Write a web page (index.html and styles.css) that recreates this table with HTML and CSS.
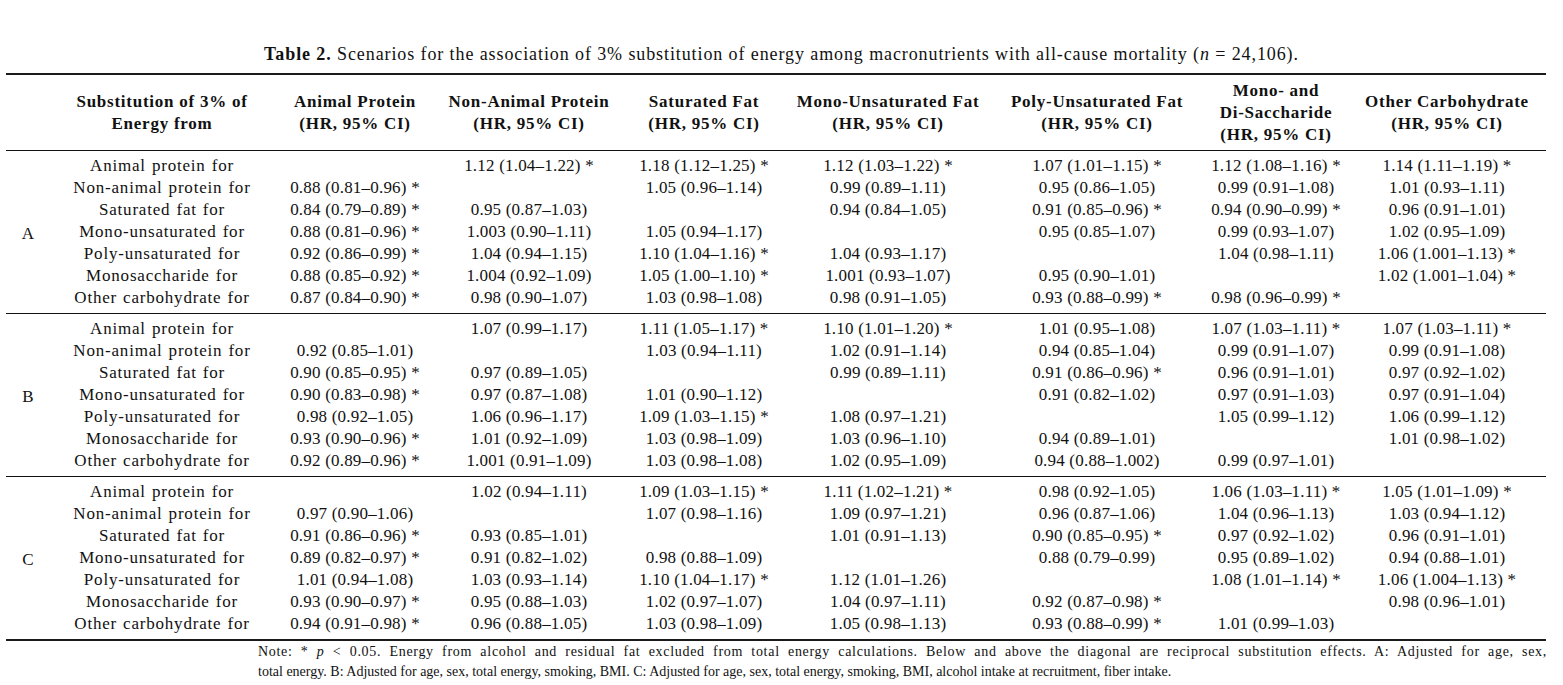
FILE: index.html
```html
<!DOCTYPE html>
<html lang="en">
<head>
<meta charset="utf-8">
<title>Table 2</title>
<link rel="stylesheet" href="styles.css">
</head>
<body>
<p class="caption"><b>Table 2.</b> Scenarios for the association of 3% substitution of energy among macronutrients with all-cause mortality (<i>n</i> = 24,106).</p>
<table class="tbl">
<colgroup>
<col class="c-grp"><col class="c-lab"><col class="c-ap"><col class="c-nap"><col class="c-sf"><col class="c-muf"><col class="c-puf"><col class="c-mds"><col class="c-oc">
</colgroup>
<thead>
<tr>
<th></th>
<th>Substitution of 3% of<br>Energy from</th>
<th>Animal Protein<br>(HR, 95% CI)</th>
<th>Non-Animal Protein<br>(HR, 95% CI)</th>
<th>Saturated Fat<br>(HR, 95% CI)</th>
<th>Mono-Unsaturated Fat<br>(HR, 95% CI)</th>
<th>Poly-Unsaturated Fat<br>(HR, 95% CI)</th>
<th>Mono- and<br>Di-Saccharide<br>(HR, 95% CI)</th>
<th>Other Carbohydrate<br>(HR, 95% CI)</th>
</tr>
</thead>
<tbody>
<tr><td class="grp" rowspan="7">A</td><td class="lab">Animal protein for</td><td></td><td>1.12 (1.04–1.22) *</td><td>1.18 (1.12–1.25) *</td><td>1.12 (1.03–1.22) *</td><td>1.07 (1.01–1.15) *</td><td>1.12 (1.08–1.16) *</td><td>1.14 (1.11–1.19) *</td></tr>
<tr><td class="lab">Non-animal protein for</td><td>0.88 (0.81–0.96) *</td><td></td><td>1.05 (0.96–1.14)</td><td>0.99 (0.89–1.11)</td><td>0.95 (0.86–1.05)</td><td>0.99 (0.91–1.08)</td><td>1.01 (0.93–1.11)</td></tr>
<tr><td class="lab">Saturated fat for</td><td>0.84 (0.79–0.89) *</td><td>0.95 (0.87–1.03)</td><td></td><td>0.94 (0.84–1.05)</td><td>0.91 (0.85–0.96) *</td><td>0.94 (0.90–0.99) *</td><td>0.96 (0.91–1.01)</td></tr>
<tr><td class="lab">Mono-unsaturated for</td><td>0.88 (0.81–0.96) *</td><td>1.003 (0.90–1.11)</td><td>1.05 (0.94–1.17)</td><td></td><td>0.95 (0.85–1.07)</td><td>0.99 (0.93–1.07)</td><td>1.02 (0.95–1.09)</td></tr>
<tr><td class="lab">Poly-unsaturated for</td><td>0.92 (0.86–0.99) *</td><td>1.04 (0.94–1.15)</td><td>1.10 (1.04–1.16) *</td><td>1.04 (0.93–1.17)</td><td></td><td>1.04 (0.98–1.11)</td><td>1.06 (1.001–1.13) *</td></tr>
<tr><td class="lab">Monosaccharide for</td><td>0.88 (0.85–0.92) *</td><td>1.004 (0.92–1.09)</td><td>1.05 (1.00–1.10) *</td><td>1.001 (0.93–1.07)</td><td>0.95 (0.90–1.01)</td><td></td><td>1.02 (1.001–1.04) *</td></tr>
<tr><td class="lab">Other carbohydrate for</td><td>0.87 (0.84–0.90) *</td><td>0.98 (0.90–1.07)</td><td>1.03 (0.98–1.08)</td><td>0.98 (0.91–1.05)</td><td>0.93 (0.88–0.99) *</td><td>0.98 (0.96–0.99) *</td><td></td></tr>
</tbody>
<tbody>
<tr><td class="grp" rowspan="7">B</td><td class="lab">Animal protein for</td><td></td><td>1.07 (0.99–1.17)</td><td>1.11 (1.05–1.17) *</td><td>1.10 (1.01–1.20) *</td><td>1.01 (0.95–1.08)</td><td>1.07 (1.03–1.11) *</td><td>1.07 (1.03–1.11) *</td></tr>
<tr><td class="lab">Non-animal protein for</td><td>0.92 (0.85–1.01)</td><td></td><td>1.03 (0.94–1.11)</td><td>1.02 (0.91–1.14)</td><td>0.94 (0.85–1.04)</td><td>0.99 (0.91–1.07)</td><td>0.99 (0.91–1.08)</td></tr>
<tr><td class="lab">Saturated fat for</td><td>0.90 (0.85–0.95) *</td><td>0.97 (0.89–1.05)</td><td></td><td>0.99 (0.89–1.11)</td><td>0.91 (0.86–0.96) *</td><td>0.96 (0.91–1.01)</td><td>0.97 (0.92–1.02)</td></tr>
<tr><td class="lab">Mono-unsaturated for</td><td>0.90 (0.83–0.98) *</td><td>0.97 (0.87–1.08)</td><td>1.01 (0.90–1.12)</td><td></td><td>0.91 (0.82–1.02)</td><td>0.97 (0.91–1.03)</td><td>0.97 (0.91–1.04)</td></tr>
<tr><td class="lab">Poly-unsaturated for</td><td>0.98 (0.92–1.05)</td><td>1.06 (0.96–1.17)</td><td>1.09 (1.03–1.15) *</td><td>1.08 (0.97–1.21)</td><td></td><td>1.05 (0.99–1.12)</td><td>1.06 (0.99–1.12)</td></tr>
<tr><td class="lab">Monosaccharide for</td><td>0.93 (0.90–0.96) *</td><td>1.01 (0.92–1.09)</td><td>1.03 (0.98–1.09)</td><td>1.03 (0.96–1.10)</td><td>0.94 (0.89–1.01)</td><td></td><td>1.01 (0.98–1.02)</td></tr>
<tr><td class="lab">Other carbohydrate for</td><td>0.92 (0.89–0.96) *</td><td>1.001 (0.91–1.09)</td><td>1.03 (0.98–1.08)</td><td>1.02 (0.95–1.09)</td><td>0.94 (0.88–1.002)</td><td>0.99 (0.97–1.01)</td><td></td></tr>
</tbody>
<tbody>
<tr><td class="grp" rowspan="7">C</td><td class="lab">Animal protein for</td><td></td><td>1.02 (0.94–1.11)</td><td>1.09 (1.03–1.15) *</td><td>1.11 (1.02–1.21) *</td><td>0.98 (0.92–1.05)</td><td>1.06 (1.03–1.11) *</td><td>1.05 (1.01–1.09) *</td></tr>
<tr><td class="lab">Non-animal protein for</td><td>0.97 (0.90–1.06)</td><td></td><td>1.07 (0.98–1.16)</td><td>1.09 (0.97–1.21)</td><td>0.96 (0.87–1.06)</td><td>1.04 (0.96–1.13)</td><td>1.03 (0.94–1.12)</td></tr>
<tr><td class="lab">Saturated fat for</td><td>0.91 (0.86–0.96) *</td><td>0.93 (0.85–1.01)</td><td></td><td>1.01 (0.91–1.13)</td><td>0.90 (0.85–0.95) *</td><td>0.97 (0.92–1.02)</td><td>0.96 (0.91–1.01)</td></tr>
<tr><td class="lab">Mono-unsaturated for</td><td>0.89 (0.82–0.97) *</td><td>0.91 (0.82–1.02)</td><td>0.98 (0.88–1.09)</td><td></td><td>0.88 (0.79–0.99)</td><td>0.95 (0.89–1.02)</td><td>0.94 (0.88–1.01)</td></tr>
<tr><td class="lab">Poly-unsaturated for</td><td>1.01 (0.94–1.08)</td><td>1.03 (0.93–1.14)</td><td>1.10 (1.04–1.17) *</td><td>1.12 (1.01–1.26)</td><td></td><td>1.08 (1.01–1.14) *</td><td>1.06 (1.004–1.13) *</td></tr>
<tr><td class="lab">Monosaccharide for</td><td>0.93 (0.90–0.97) *</td><td>0.95 (0.88–1.03)</td><td>1.02 (0.97–1.07)</td><td>1.04 (0.97–1.11)</td><td>0.92 (0.87–0.98) *</td><td></td><td>0.98 (0.96–1.01)</td></tr>
<tr><td class="lab">Other carbohydrate for</td><td>0.94 (0.91–0.98) *</td><td>0.96 (0.88–1.05)</td><td>1.03 (0.98–1.09)</td><td>1.05 (0.98–1.13)</td><td>0.93 (0.88–0.99) *</td><td>1.01 (0.99–1.03)</td><td></td></tr>
</tbody>
</table>
<div class="note">
<span class="note-l1">Note: * <i>p</i> &lt; 0.05. Energy from alcohol and residual fat excluded from total energy calculations. Below and above the diagonal are reciprocal substitution effects. A: Adjusted for age, sex,</span>
<span class="note-l2">total energy. B: Adjusted for age, sex, total energy, smoking, BMI. C: Adjusted for age, sex, total energy, smoking, BMI, alcohol intake at recruitment, fiber intake.</span>
</div>
</body>
</html>
```

FILE: styles.css
```css
html, body {
  margin: 0;
  padding: 0;
  background: #ffffff;
}

body {
  width: 1563px;
  height: 685px;
  overflow: hidden;
  color: #111111;
  font-family: "Liberation Serif", "Times New Roman", serif;
}

.caption {
  margin: 44px 0 0 0;
  height: 20px;
  line-height: 20px;
  font-size: 18px;
  letter-spacing: 0.9px;
  text-align: center;
  white-space: nowrap;
}

.tbl {
  margin: 9px 0 0 6px;
  width: 1540px;
  table-layout: fixed;
  border-collapse: separate;
  border-spacing: 0;
  border-top: 2px solid #1a1a1a;
  border-bottom: 2px solid #1a1a1a;
  font-size: 17px;
}

.c-grp { width: 44px; }
.c-lab { width: 224px; }
.c-ap  { width: 162px; }
.c-nap { width: 186px; }
.c-sf  { width: 164px; }
.c-muf { width: 204px; }
.c-puf { width: 214px; }
.c-mds { width: 144px; }
.c-oc  { width: 198px; }

.tbl th {
  height: 75px;
  padding: 0;
  border-bottom: 1px solid #111111;
  font-weight: bold;
  line-height: 22px;
  letter-spacing: 0.75px;
  text-align: center;
  vertical-align: middle;
  white-space: nowrap;
}

.tbl td {
  height: 22px;
  padding: 0;
  line-height: 22px;
  text-align: center;
  vertical-align: middle;
  white-space: nowrap;
  letter-spacing: 0.2px;
}

.tbl tbody tr:first-child td {
  padding-top: 4px;
}

.tbl tbody tr:last-child td {
  padding-bottom: 4px;
}

.tbl tbody + tbody tr:first-child td {
  border-top: 1px solid #111111;
}

.tbl td.grp {
  padding: 0;
  letter-spacing: 0;
}

.tbl td.lab {
  letter-spacing: 0.8px;
  word-spacing: 1px;
}

.note {
  margin: 1px 0 0 258px;
  width: 1289px;
  font-size: 14px;
  line-height: 20px;
}

.note-l1 {
  display: block;
  letter-spacing: 0.7px;
  text-align: justify;
  text-align-last: justify;
  white-space: nowrap;
}

.note-l2 {
  display: block;
  letter-spacing: 0;
  white-space: nowrap;
}
```
